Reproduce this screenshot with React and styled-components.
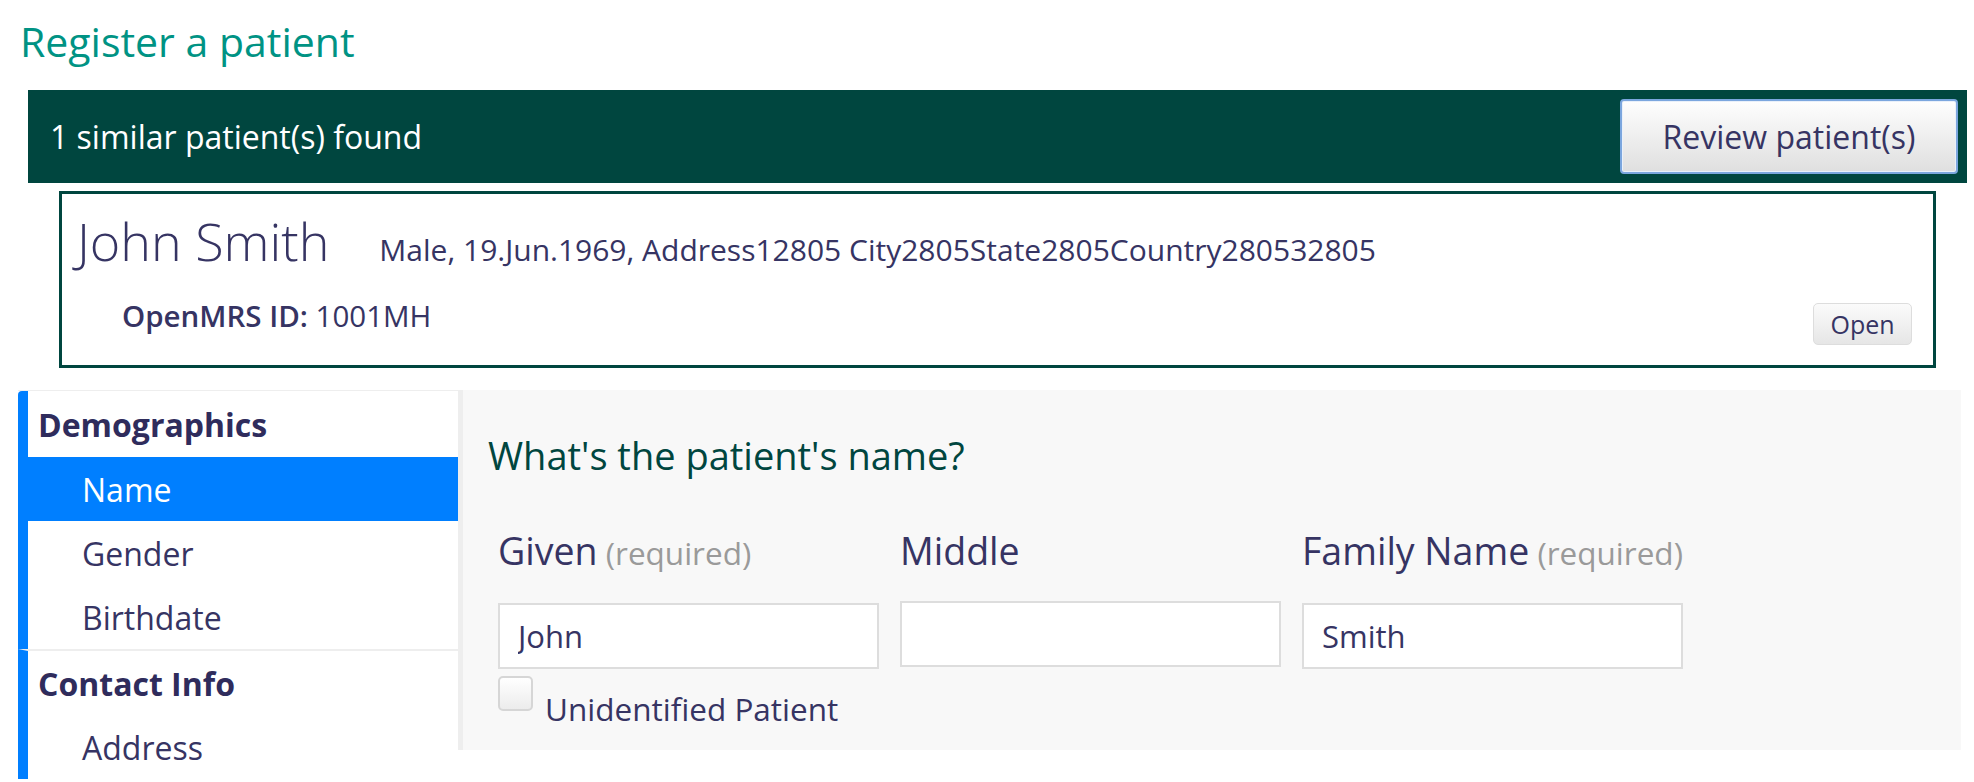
import React from "react";
import styled, { createGlobalStyle } from "styled-components";

const GlobalStyle = createGlobalStyle`
  html, body {
    margin: 0;
    padding: 0;
    overflow: hidden;
    background: #ffffff;
  }
  body {
    font-family: "Open Sans", "Noto Sans", sans-serif;
    color: #363463;
  }
  * { box-sizing: border-box; }
`;

const Page = styled.div`
  width: 1974px;
  height: 782px;
  display: flex;
  flex-direction: column;
`;

const Title = styled.h1`
  margin: 0;
  padding: 13px 0 0 20px;
  font-size: 41px;
  line-height: 56px;
  font-weight: 400;
  color: #009384;
`;

const Banner = styled.div`
  margin: 21px 7px 0 28px;
  height: 93px;
  background: #00463f;
  display: flex;
  align-items: center;
  justify-content: space-between;
  padding: 0 9px 0 22px;
`;

const BannerText = styled.span`
  color: #ffffff;
  font-size: 32px;
`;

const ReviewButton = styled.button`
  height: 75px;
  width: 338px;
  padding: 0;
  font-family: inherit;
  font-size: 32px;
  color: #363463;
  border: 2px solid #7ba6de;
  border-radius: 4px;
  background: linear-gradient(#fefefe, #dfdfdf);
  box-shadow: inset 0 0 0 1px #e9f0fa;
`;

const PatientCard = styled.div`
  margin: 8px 38px 0 59px;
  border: 3px solid #00463f;
  padding: 13px 21px 20px 15px;
`;

const CardHead = styled.div`
  display: flex;
  align-items: baseline;
  gap: 50px;
`;

const PatientName = styled.span`
  font-size: 52px;
  line-height: 68px;
  font-weight: 300;
`;

const PatientMeta = styled.span`
  font-size: 30px;
`;

const CardFoot = styled.div`
  margin-top: 21px;
  display: flex;
  justify-content: space-between;
  align-items: flex-start;
`;

const Identifier = styled.span`
  padding-left: 45px;
  font-size: 29.5px;
  line-height: 40px;
`;

const IdLabel = styled.b`
  font-weight: 600;
`;

const OpenButton = styled.button`
  margin-top: 7px;
  width: 99px;
  height: 42px;
  padding: 0;
  font-family: inherit;
  font-size: 25px;
  color: #363463;
  border: 1px solid #dddddd;
  border-radius: 5px;
  background: linear-gradient(#fbfbfb, #e6e6e6);
`;

const Workspace = styled.div`
  margin: 22px 13px 0 18px;
  display: flex;
  align-items: flex-start;
`;

const Sidebar = styled.nav`
  width: 440px;
  flex-shrink: 0;
  border-top: 1px solid #eeeeee;
`;

const Section = styled.div`
  border-left: 10px solid #007fff;
  border-top: ${(p) => (p.$divided ? "2px solid #eeeeee" : "0")};
  border-top-left-radius: ${(p) => (p.$divided ? "0" : "4px")};
`;

const SectionTitle = styled.div`
  height: ${(p) => p.$h}px;
  display: flex;
  align-items: center;
  padding-left: 10px;
  font-size: 32px;
  font-weight: 700;
  color: #2f2c5c;
`;

const NavItem = styled.div`
  height: 64px;
  display: flex;
  align-items: center;
  padding-left: 54px;
  font-size: 32px;
  color: ${(p) => (p.$active ? "#ffffff" : "#363463")};
  background: ${(p) => (p.$active ? "#007fff" : "transparent")};
`;

const FormPanel = styled.section`
  flex: 1;
  background: #f8f8f8;
  border-left: 5px solid #eeeeee;
  padding: 39px 20px 20px 25px;
`;

const Question = styled.h2`
  margin: 0;
  font-size: 38px;
  line-height: 52px;
  font-weight: 400;
  color: #00463f;
`;

const Fields = styled.div`
  margin: 45px 0 0 10px;
  display: grid;
  grid-template-columns: repeat(3, 381px);
  column-gap: 21px;
`;

const Field = styled.div`
  display: flex;
  flex-direction: column;
`;

const Label = styled.label`
  font-size: 37.5px;
  line-height: 50px;
  white-space: nowrap;
`;

const Hint = styled.span`
  font-size: 31.5px;
  color: #9a9a9a;
`;

const TextInput = styled.input`
  margin-top: 25px;
  height: 66px;
  width: 100%;
  border: 2px solid #dddddd;
  background: #ffffff;
  padding: 0 18px;
  font-family: inherit;
  font-size: 31px;
  color: #363463;
  outline: none;
`;

const CheckRow = styled.div`
  margin: 7px 0 0 10px;
  display: flex;
  align-items: flex-start;
  gap: 12px;
`;

const CheckBox = styled.span`
  width: 35px;
  height: 35px;
  border: 2px solid #d6d6d6;
  border-radius: 5px;
  background: linear-gradient(#ffffff, #ececec);
`;

const CheckLabel = styled.span`
  margin-top: 12px;
  font-size: 31.5px;
  line-height: 42px;
`;

const fields = [
  { label: "Given", required: true, value: "John" },
  { label: "Middle", required: false, value: "" },
  { label: "Family Name", required: true, value: "Smith" },
];

export default function App() {
  return (
    <Page>
      <GlobalStyle />
      <Title>Register a patient</Title>
      <Banner>
        <BannerText>1 similar patient(s) found</BannerText>
        <ReviewButton>Review patient(s)</ReviewButton>
      </Banner>
      <PatientCard>
        <CardHead>
          <PatientName>John Smith</PatientName>
          <PatientMeta>
            Male, 19.Jun.1969, Address12805 City2805State2805Country280532805
          </PatientMeta>
        </CardHead>
        <CardFoot>
          <Identifier>
            <IdLabel>OpenMRS ID:</IdLabel> 1001MH
          </Identifier>
          <OpenButton>Open</OpenButton>
        </CardFoot>
      </PatientCard>
      <Workspace>
        <Sidebar>
          <Section>
            <SectionTitle $h={66}>Demographics</SectionTitle>
            <NavItem $active>Name</NavItem>
            <NavItem>Gender</NavItem>
            <NavItem>Birthdate</NavItem>
          </Section>
          <Section $divided>
            <SectionTitle $h={64}>Contact Info</SectionTitle>
            <NavItem>Address</NavItem>
          </Section>
        </Sidebar>
        <FormPanel>
          <Question>What's the patient's name?</Question>
          <Fields>
            {fields.map((f) => (
              <Field key={f.label}>
                <Label>
                  {f.label}
                  {f.required && <Hint> (required)</Hint>}
                </Label>
                <TextInput type="text" defaultValue={f.value} />
              </Field>
            ))}
          </Fields>
          <CheckRow>
            <CheckBox />
            <CheckLabel>Unidentified Patient</CheckLabel>
          </CheckRow>
        </FormPanel>
      </Workspace>
    </Page>
  );
}
